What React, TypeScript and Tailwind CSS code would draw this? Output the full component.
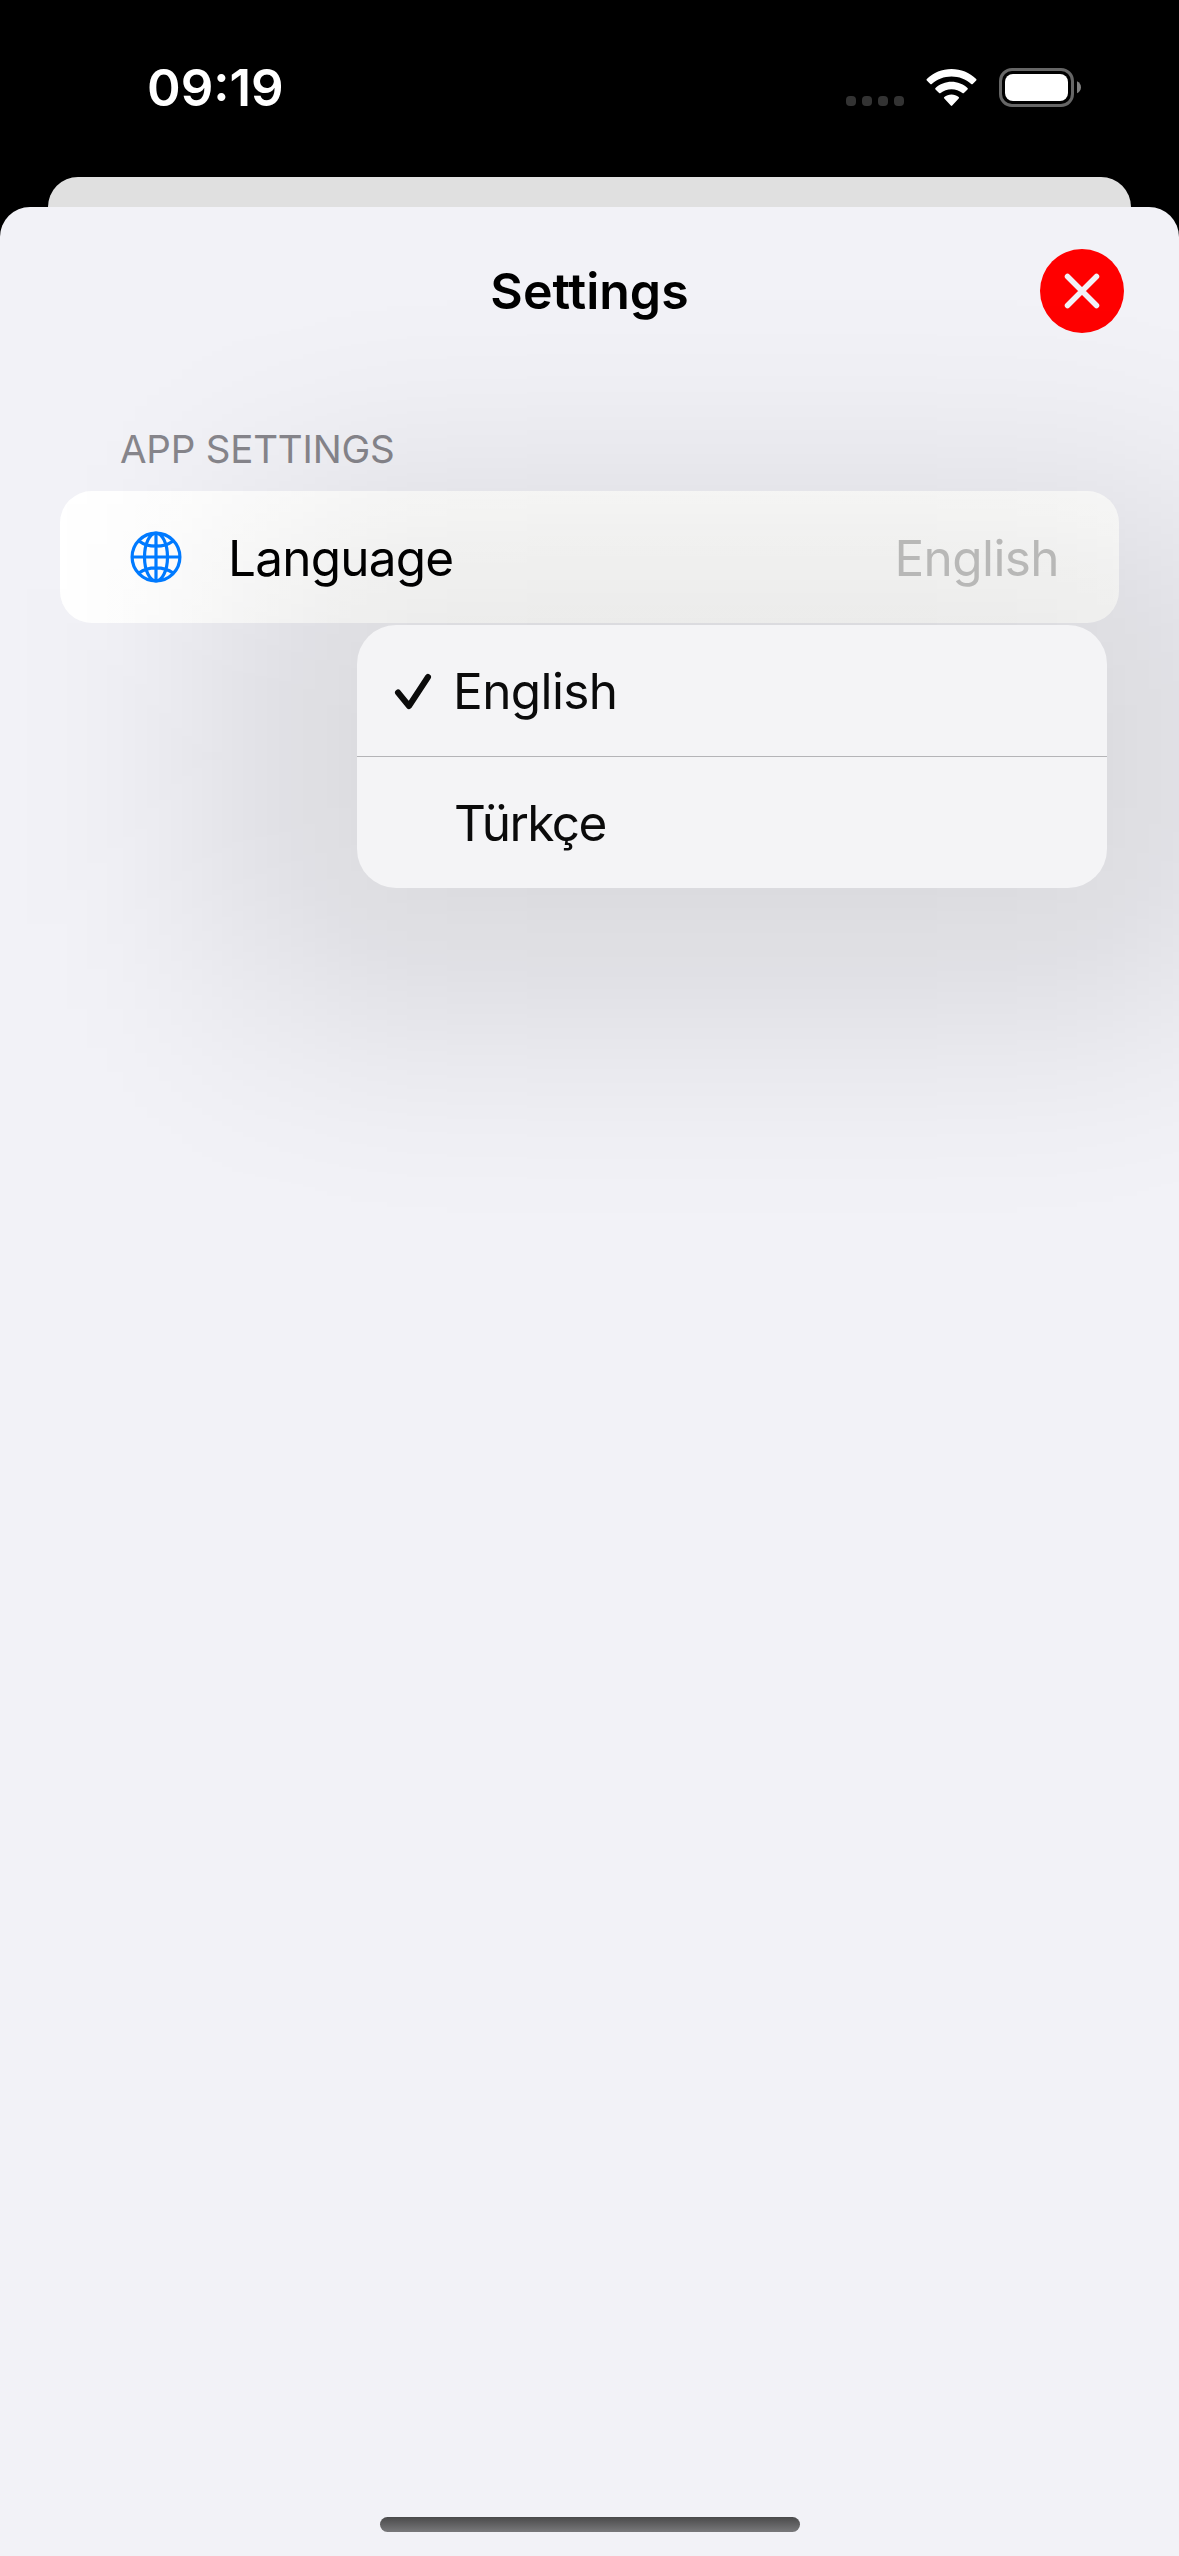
function StatusIcons() {
  return (
    <div className="flex">
      <div className="mt-[27px] mr-[22px] flex gap-1.5">
        <span className="size-2.5 rounded-[4px] bg-[#333333]" />
        <span className="size-2.5 rounded-[4px] bg-[#333333]" />
        <span className="size-2.5 rounded-[4px] bg-[#333333]" />
        <span className="size-2.5 rounded-[4px] bg-[#333333]" />
      </div>
      <svg width="51" height="38" viewBox="0 0 51 38" fill="#fff" className="mr-[22px]">
        <path d="M25.5 0C35 0 43.500 3.600 50.200 10Q50.900 10.700 50.200 11.500L46.700 15Q46 15.700 45.200 15C39.800 10.200 33 7.500 25.500 7.500S11.200 10.200 5.800 15Q5 15.700 4.300 15L.8 11.500Q.1 10.700.8 10C7.500 3.600 16 0 25.500 0Z" />
        <path d="M25.500 12.700C31.500 12.700 37.200 15 41.500 18.900Q42.300 19.700 41.500 20.400L37.900 24Q37.200 24.700 36.400 24C33.400 21.500 29.600 20.200 25.500 20.200S17.600 21.500 14.600 24Q13.800 24.700 13.100 24L9.500 20.400Q8.700 19.700 9.500 18.900C13.800 15 19.500 12.700 25.500 12.700Z" />
        <path d="M25.500 25.500C28.200 25.500 30.700 26.400 32.700 27.900Q33.500 28.700 32.700 29.500L26.200 36.500Q25.500 37.300 24.800 36.500L18.300 29.500Q17.500 28.700 18.300 27.900C20.300 26.400 22.800 25.500 25.500 25.500Z" />
      </svg>
      <svg width="83" height="40" viewBox="0 0 83 40" className="-mt-px">
        <rect x="1.500" y="1.500" width="72" height="36" rx="11.500" fill="none" stroke="#666" strokeWidth="3" />
        <rect x="6" y="6" width="63" height="27" rx="8" fill="#fff" />
        <path d="M78 13.300C80.500 14.400 82 16.700 82 19.300S80.500 24.200 78 25.300Z" fill="#808080" />
      </svg>
    </div>
  );
}

function Globe() {
  return (
    <svg width="52" height="52" viewBox="0 0 52 52" fill="none" stroke="#007aff" strokeWidth="3.2">
      <circle cx="26" cy="26" r="23.900" />
      <ellipse cx="26" cy="26" rx="11.500" ry="23.900" />
      <path d="M26 2V50M2 26H50M9 10C13.500 13.500 19.500 15.200 26 15.200S38.500 13.500 43 10M9 42C13.500 38.500 19.500 36.800 26 36.800S38.500 38.500 43 42" />
    </svg>
  );
}

// Soft shade around the menu: a horizontal falloff masked by a vertical one.
function MenuShade() {
  return (
    <div className="pointer-events-none absolute -top-[346px] -left-[183px] h-[1223px] w-[1710px] opacity-95 bg-[linear-gradient(to_right,rgba(0,0,0,0)_0px,rgba(0,0,0,0.0007)_60px,rgba(0,0,0,0.0028)_120px,rgba(0,0,0,0.0082)_180px,rgba(0,0,0,0.0194)_240px,rgba(0,0,0,0.0377)_300px,rgba(0,0,0,0.061)_360px,rgba(0,0,0,0.0843)_420px,rgba(0,0,0,0.1026)_480px,rgba(0,0,0,0.1138)_540px,rgba(0,0,0,0.1192)_600px,rgba(0,0,0,0.122)_700px,rgba(0,0,0,0.122)_1010px,rgba(0,0,0,0.1192)_1110px,rgba(0,0,0,0.1138)_1170px,rgba(0,0,0,0.1026)_1230px,rgba(0,0,0,0.0843)_1290px,rgba(0,0,0,0.061)_1350px,rgba(0,0,0,0.0377)_1410px,rgba(0,0,0,0.0194)_1470px,rgba(0,0,0,0.0082)_1530px,rgba(0,0,0,0)_1710px)] [mask-image:linear-gradient(to_bottom,rgba(0,0,0,0)_0px,rgba(0,0,0,0.006)_60px,rgba(0,0,0,0.023)_120px,rgba(0,0,0,0.067)_180px,rgba(0,0,0,0.159)_240px,rgba(0,0,0,0.309)_300px,rgba(0,0,0,0.5)_360px,rgba(0,0,0,0.691)_420px,rgba(0,0,0,0.841)_480px,rgba(0,0,0,0.93)_540px,rgba(0,0,0,0.963)_611px,rgba(0,0,0,0.93)_683px,rgba(0,0,0,0.841)_743px,rgba(0,0,0,0.691)_803px,rgba(0,0,0,0.5)_863px,rgba(0,0,0,0.309)_923px,rgba(0,0,0,0.159)_983px,rgba(0,0,0,0.067)_1043px,rgba(0,0,0,0.023)_1103px,rgba(0,0,0,0.006)_1163px,rgba(0,0,0,0)_1223px)]" />
  );
}

function LanguageMenu() {
  return (
    <div className="absolute top-[134px] left-[297px] h-[263px] w-[750px] rounded-[39px] bg-[#f4f4f6] text-[49.5px] tracking-[-0.6px] text-[#0b0b0b]">
      <div className="flex h-[132px] items-center border-b-[1px] border-[#b4b4b7] pl-[37px]">
        <svg width="38" height="38" viewBox="0 0 38 38" fill="none" stroke="#0b0b0b" strokeWidth="6" strokeLinecap="round" strokeLinejoin="round">
          <path d="M4 20.500L15 34L34 5" />
        </svg>
        <span className="ml-[21px] pt-0.5">English</span>
      </div>
      <div className="flex h-[131px] items-center pt-0.5 pl-[97px] tracking-[-1.6px]">Türkçe</div>
    </div>
  );
}

export default function App() {
  return (
    <div className="flex h-[2556px] w-[1179px] flex-col overflow-hidden bg-black font-['Inter',sans-serif] text-black">
      <header className="flex h-[177px] shrink-0 justify-between pt-[69px] pr-[97px] pl-[147px]">
        <span className="-mt-[11px] text-[51px] leading-[60px] font-semibold tracking-[0px] text-white">09:19</span>
        <StatusIcons />
      </header>
      <div className="mx-12 h-[30px] shrink-0 rounded-t-[30px] bg-[#e0e0e0]" />
      <main className="flex flex-1 flex-col overflow-hidden rounded-t-[30px] bg-[#f2f2f7]">
        <div className="grid h-[168px] grid-cols-3 items-center pr-[55px] pl-[55px]">
          <h1 className="col-start-2 text-center text-[50px] font-semibold tracking-[0px]">Settings</h1>
          <button className="flex size-[84px] items-center justify-center justify-self-end rounded-full bg-[#ff0000]">
            <svg width="36" height="36" viewBox="0 0 36 36" stroke="#f2f2f7" strokeWidth="5.500" strokeLinecap="round">
              <path d="M3.500 3.500L32.500 32.500M32.500 3.500L3.500 32.500" />
            </svg>
          </button>
        </div>
        <section className="mt-[48px] px-[60px]">
          <h2 className="h-[68px] pl-[60px] text-[38.5px] leading-[52px] tracking-[-0.2px] text-[#87868c]">APP SETTINGS</h2>
          <div className="relative rounded-[32px] bg-white">
            <MenuShade />
            <div className="relative flex h-[132px] items-center rounded-[32px] bg-linear-to-r from-white/20 to-[#fffffa]/20 to-40% pr-[60px] pl-[70px] text-[49.5px] tracking-[-0.6px]">
              <Globe />
              <span className="ml-[46px] flex-1 pt-0.5 tracking-[-0.8px]">Language</span>
              <span className="pt-0.5 text-[#b8b8b7]">English</span>
            </div>
            <LanguageMenu />
          </div>
        </section>
        <div className="mx-auto mt-auto mb-6 h-[15px] w-[420px] rounded-full bg-linear-to-b from-[#4a4a4b] to-[#79797b]" />
      </main>
    </div>
  );
}
